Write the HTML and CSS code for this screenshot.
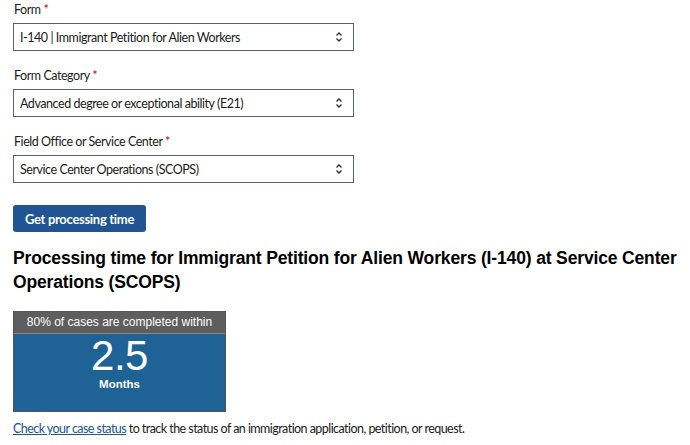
FILE: index.html
```html
<!DOCTYPE html>
<html lang="en">
<head>
    <meta charset="UTF-8">
    <meta name="viewport" content="width=device-width, initial-scale=1.0">
    <title>Check Case Processing Times</title>
    <link rel="stylesheet" href="styles.css">
</head>
<body>
    <form class="times-form">
        <div class="field">
            <label for="form">Form <span class="req">*</span></label>
            <div class="select-box">
                <select id="form">
                    <option>I-140 | Immigrant Petition for Alien Workers</option>
                </select>
                <svg class="chev" width="8" height="12" viewBox="0 0 8 12"><path d="M1.5 4.5 4 2l2.5 2.5M1.5 7.5 4 10l2.5-2.5" fill="none" stroke="#333" stroke-width="1.4"/></svg>
            </div>
        </div>
        <div class="field">
            <label for="category">Form Category <span class="req">*</span></label>
            <div class="select-box">
                <select id="category">
                    <option>Advanced degree or exceptional ability (E21)</option>
                </select>
                <svg class="chev" width="8" height="12" viewBox="0 0 8 12"><path d="M1.5 4.5 4 2l2.5 2.5M1.5 7.5 4 10l2.5-2.5" fill="none" stroke="#333" stroke-width="1.4"/></svg>
            </div>
        </div>
        <div class="field">
            <label for="office">Field Office or Service Center <span class="req">*</span></label>
            <div class="select-box">
                <select id="office">
                    <option>Service Center Operations (SCOPS)</option>
                </select>
                <svg class="chev" width="8" height="12" viewBox="0 0 8 12"><path d="M1.5 4.5 4 2l2.5 2.5M1.5 7.5 4 10l2.5-2.5" fill="none" stroke="#333" stroke-width="1.4"/></svg>
            </div>
        </div>
        <button type="button" class="btn-primary">Get processing time</button>
    </form>

    <h2 class="result-title">Processing time for Immigrant Petition for Alien Workers (I-140) at Service Center Operations (SCOPS)</h2>

    <div class="time-card">
        <div class="time-card-head">80% of cases are completed within</div>
        <div class="time-card-body">
            <div class="time-value">2.5</div>
            <div class="time-unit">Months</div>
        </div>
    </div>

    <p class="case-note"><a href="#">Check your case status</a> to track the status of an immigration application, petition, or request.</p>
</body>
</html>
```

FILE: styles.css
```css
body {
    margin: 0;
    padding: 3px 13px;
    background: #fff;
    color: #1b1b1b;
    font-family: Lato, "Noto Sans", sans-serif;
    font-size: 12.5px;
    letter-spacing: -0.45px;
}
.times-form {
    display: flex;
    flex-direction: column;
    align-items: flex-start;
}
.field {
    display: flex;
    flex-direction: column;
    gap: 6px;
    margin-bottom: 18px;
}
.field label {
    padding-left: 1px;
    line-height: 14px;
}
.req {
    color: #b50909;
}
.select-box {
    position: relative;
    width: 341px;
}
.select-box select {
    appearance: none;
    width: 100%;
    height: 28px;
    padding: 0 24px 0 6px;
    border: 1px solid #5b616b;
    border-radius: 0;
    background: #fff;
    color: #1b1b1b;
    font: inherit;
    letter-spacing: inherit;
}
.chev {
    position: absolute; /* sits over the select's right end */
    right: 11px;
    top: 8px;
    pointer-events: none;
}
.btn-primary {
    margin-top: 4px;
    width: 133px;
    height: 27px;
    border: none;
    border-radius: 3px;
    background: #205493;
    color: #fff;
    font: bold 13px Lato, "Noto Sans", sans-serif;
    letter-spacing: -0.3px;
    cursor: pointer;
}
.result-title {
    margin: 14px 0 17px;
    font: bold 17.5px/24px "Liberation Sans", Arial, sans-serif;
    letter-spacing: -0.15px;
    color: #000;
}
.time-card {
    box-sizing: border-box;
    width: 213px;
    border: 1px solid #555;
    font-family: "Liberation Sans", Arial, sans-serif;
    color: #fff;
    text-align: center;
}
.time-card-head {
    height: 21px;
    line-height: 21px;
    background: #5e5e5e;
    border-bottom: 1px solid #8a8a8a;
    font-size: 12px;
    letter-spacing: 0;
}
.time-card-body {
    height: 77px;
    background: #1f6396;
}
.time-value {
    font-size: 42px;
    line-height: 44px;
    letter-spacing: -0.5px;
}
.time-unit {
    font-size: 11.5px;
    font-weight: bold;
    letter-spacing: 0;
}
.case-note {
    margin: 9px 0 0;
    line-height: 16px;
    letter-spacing: -0.55px;
}
.case-note a {
    color: #205493;
}
```
